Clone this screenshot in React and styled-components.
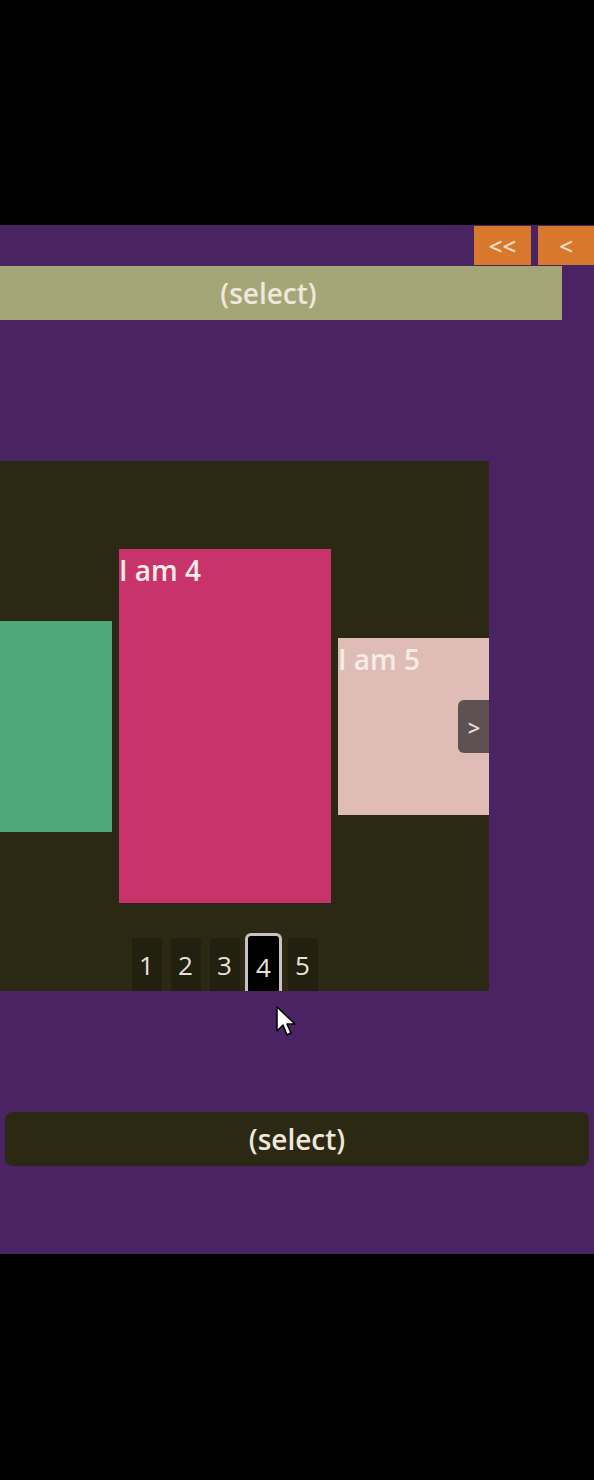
import React from "react";
import styled, { createGlobalStyle } from "styled-components";

const Global = createGlobalStyle`
  html, body {
    margin: 0;
    padding: 0;
    background: #000;
  }
  body {
    font-family: "Open Sans", "Noto Sans", sans-serif;
  }
`;

const Page = styled.div`
  width: 594px;
  height: 1480px;
  background: #000;
  overflow: hidden;
  display: flex;
  flex-direction: column;
`;

const Stage = styled.main`
  margin-top: 225px;
  height: 1029px;
  background: #4a2462;
  display: flex;
  flex-direction: column;
  position: relative;
`;

const Toolbar = styled.div`
  display: flex;
  justify-content: flex-end;
  gap: 7px;
  padding-top: 1px;
`;

const NavButton = styled.button`
  width: ${(p) => p.$w}px;
  height: 39px;
  border: 0;
  padding: 0;
  background: #d8782c;
  color: #f3dcc4;
  font-family: inherit;
  font-weight: 600;
  font-size: 24px;
  line-height: 39px;
`;

const SelectBar = styled.div`
  height: 54px;
  margin-top: 1px;
  width: ${(p) => (p.$dark ? "584px" : "587px")};
  margin-left: ${(p) => (p.$dark ? "5px" : "-25px")};
  background: ${(p) => (p.$dark ? "#2b2813" : "#a4a677")};
  border-radius: ${(p) => (p.$dark ? "8px" : "0")};
  color: #efe6dc;
  font-size: 28px;
  font-weight: 600;
  display: flex;
  align-items: center;
  justify-content: center;
`;

const Carousel = styled.section`
  margin-top: 141px;
  width: 489px;
  height: 530px;
  background: #2b2813;
  border-radius: 0 3px 3px 0;
  position: relative;
  overflow: hidden;
  display: flex;
  align-items: center;
`;

const Track = styled.div`
  display: flex;
  align-items: center;
  gap: 7px;
  margin-left: -48px;
`;

const Slide = styled.div`
  flex: none;
  width: ${(p) => p.$w}px;
  height: ${(p) => p.$h}px;
  background: ${(p) => p.$bg};
  color: #f6ece6;
  font-size: 28px;
  font-weight: 600;
  line-height: 1;
  padding: 7px 0 0 0;
  box-sizing: border-box;
`;

const NextButton = styled.button`
  position: absolute;
  right: -1px;
  top: 239px;
  width: 32px;
  height: 53px;
  border: 0;
  border-radius: 6px 0 0 6px;
  background: rgba(70, 62, 66, 0.85);
  color: #e6dcd8;
  font-family: inherit;
  font-weight: 600;
  font-size: 22px;
  padding: 0;
`;

const Dots = styled.div`
  position: absolute;
  left: 127px;
  bottom: 0;
  display: flex;
  align-items: flex-end;
`;

const Dot = styled.div`
  width: 39px;
  height: ${(p) => (p.$active ? 58 : 53)}px;
  display: flex;
  justify-content: center;
`;

const DotBox = styled.div`
  flex: none;
  width: ${(p) => (p.$active ? "37px" : "30px")};
  height: 100%;
  box-sizing: border-box;
  background: ${(p) => (p.$active ? "#000" : "rgba(0,0,0,0.2)")};
  border: ${(p) => (p.$active ? "3px solid #c9c2c0" : "0")};
  border-bottom: 0;
  border-radius: ${(p) => (p.$active ? "6px 6px 0 0" : "3px 3px 0 0")};
  color: #e8e2dc;
  font-size: 26px;
  font-weight: 500;
  display: flex;
  align-items: center;
  justify-content: center;
  padding-top: ${(p) => (p.$active ? "6px" : "1px")};
`;

const Cursor = styled.svg`
  position: absolute;
  left: 276px;
  top: 781px;
`;

const BottomSelect = styled(SelectBar)`
  margin-top: 121px;
`;

export default function App() {
  const pages = [1, 2, 3, 4, 5];
  return (
    <Page>
      <Global />
      <Stage>
        <Toolbar>
          <NavButton $w={57}>&lt;&lt;</NavButton>
          <NavButton $w={56}>&lt;</NavButton>
        </Toolbar>
        <SelectBar>(select)</SelectBar>
        <Carousel>
          <Track>
            <Slide $w={160} $h={211} $bg="#4fa87a" />
            <Slide $w={212} $h={354} $bg="#c9336b">I am 4</Slide>
            <Slide $w={212} $h={177} $bg="#dfbdb6">I am 5</Slide>
          </Track>
          <NextButton>&gt;</NextButton>
          <Dots>
            {pages.map((n) => (
              <Dot key={n} $active={n === 4}>
                <DotBox $active={n === 4}>{n}</DotBox>
              </Dot>
            ))}
          </Dots>
        </Carousel>
        <Cursor width="22" height="32" viewBox="0 0 22 32">
          <path
            d="M1 1 L1 25 L7 19 L11 29 L15 27 L11 18 L19 18 Z"
            fill="#fff"
            stroke="#000"
            strokeWidth="1.5"
            strokeLinejoin="round"
          />
        </Cursor>
        <BottomSelect $dark>(select)</BottomSelect>
      </Stage>
    </Page>
  );
}
